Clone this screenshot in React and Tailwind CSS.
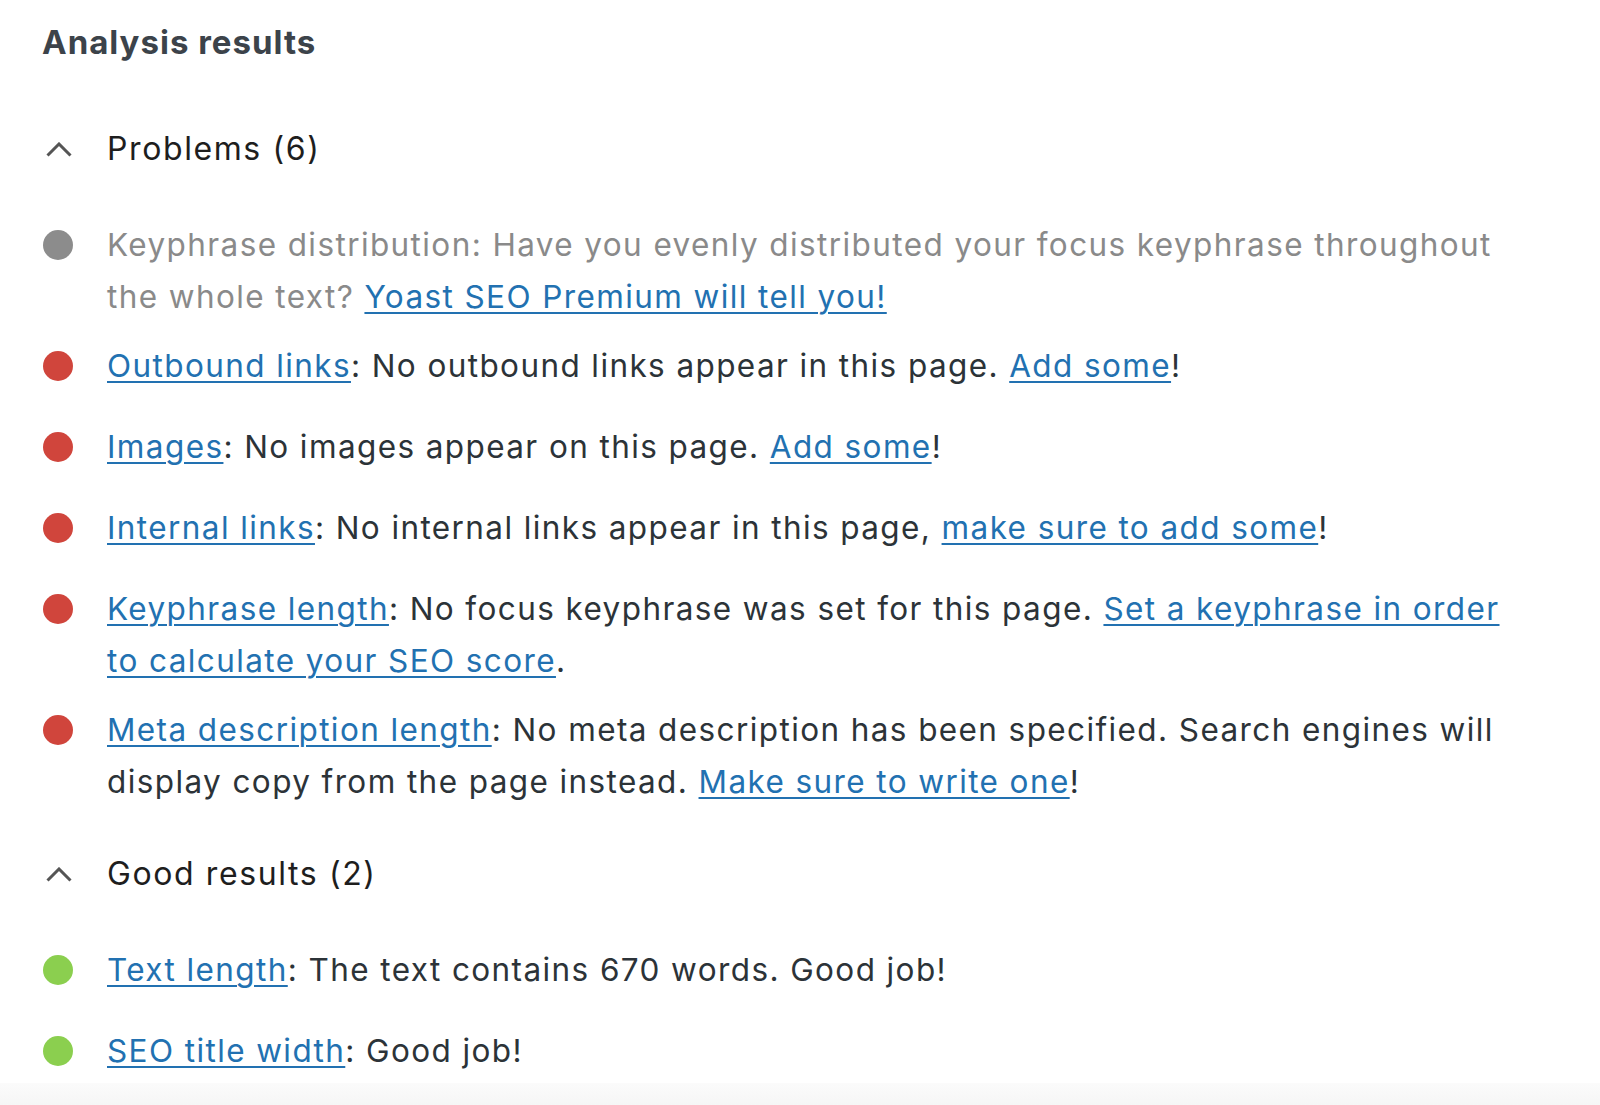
const problems = [
  {
    color: 'bg-[#8c8c8c]',
    muted: true,
    parts: [
      { t: 'Keyphrase distribution: Have you evenly distributed your focus keyphrase throughout the whole text? ' },
      { t: 'Yoast SEO Premium will tell you!', link: true },
    ],
  },
  {
    color: 'bg-[#d0453c]',
    parts: [
      { t: 'Outbound links', link: true },
      { t: ': No outbound links appear in this page. ' },
      { t: 'Add some', link: true },
      { t: '!' },
    ],
  },
  {
    color: 'bg-[#d0453c]',
    parts: [
      { t: 'Images', link: true },
      { t: ': No images appear on this page. ' },
      { t: 'Add some', link: true },
      { t: '!' },
    ],
  },
  {
    color: 'bg-[#d0453c]',
    parts: [
      { t: 'Internal links', link: true },
      { t: ': No internal links appear in this page, ' },
      { t: 'make sure to add some', link: true },
      { t: '!' },
    ],
  },
  {
    color: 'bg-[#d0453c]',
    parts: [
      { t: 'Keyphrase length', link: true },
      { t: ': No focus keyphrase was set for this page. ' },
      { t: 'Set a keyphrase in order to calculate your SEO score', link: true },
      { t: '.' },
    ],
  },
  {
    color: 'bg-[#d0453c]',
    parts: [
      { t: 'Meta description length', link: true },
      { t: ': No meta description has been specified. Search engines will display copy from the page instead. ' },
      { t: 'Make sure to write one', link: true },
      { t: '!' },
    ],
  },
];

const good = [
  {
    color: 'bg-[#8bcf4f]',
    parts: [
      { t: 'Text length', link: true },
      { t: ': The text contains 670 words. Good job!' },
    ],
  },
  {
    color: 'bg-[#8bcf4f]',
    parts: [
      { t: 'SEO title width', link: true },
      { t: ': Good job!' },
    ],
  },
];

function Chevron() {
  return (
    <svg width="26" height="15" viewBox="0 0 26 15" className="ml-[4px] shrink-0">
      <polyline points="1.5,13.5 13,2 24.5,13.5" fill="none" stroke="#555" strokeWidth="3" />
    </svg>
  );
}

function ResultList({ items }) {
  return (
    <ul className="flex flex-col gap-[17px]">
      {items.map((item, i) => (
        <li key={i} className="flex min-h-[64px]">
          <div className="w-[65px] shrink-0">
            <span className={`block w-[30px] h-[30px] rounded-full ml-px mt-[11px] ${item.color}`} />
          </div>
          <p className={`flex-1 leading-[52px] ${item.muted ? 'text-[#8a8a8a]' : 'text-[#2c3338]'}`}>
            {item.parts.map((p, j) =>
              p.link ? (
                <a key={j} href="#" className="text-[#2271b1] underline decoration-2 underline-offset-[4px]">{p.t}</a>
              ) : (
                <span key={j}>{p.t}</span>
              )
            )}
          </p>
        </li>
      ))}
    </ul>
  );
}

function Section({ title, items, className = '' }) {
  return (
    <div className={className}>
      <button className="flex items-center h-[52px] text-[32px] tracking-[1.6px] text-[#1e1e1e]">
        <Chevron />
        <span className="ml-[35px]">{title}</span>
      </button>
      <div className="mt-[44px]">
        <ResultList items={items} />
      </div>
    </div>
  );
}

export default function App() {
  return (
    <div className="min-h-screen bg-white font-['Inter','Liberation_Sans',sans-serif] text-[31.5px] tracking-[1.4px]">
      <div className="h-[1083px] pl-[42px] pr-[80px] pt-[22px]">
        <h2 className="text-[33px] leading-[40px] font-bold tracking-[1px] text-[#3c434a]">Analysis results</h2>
        <Section title="Problems (6)" items={problems} className="mt-[61px]" />
        <Section title="Good results (2)" items={good} className="mt-[40px]" />
      </div>
      <div className="h-[22px] bg-gradient-to-b from-[#fbfbfb] to-[#f6f6f6]" />
    </div>
  );
}
